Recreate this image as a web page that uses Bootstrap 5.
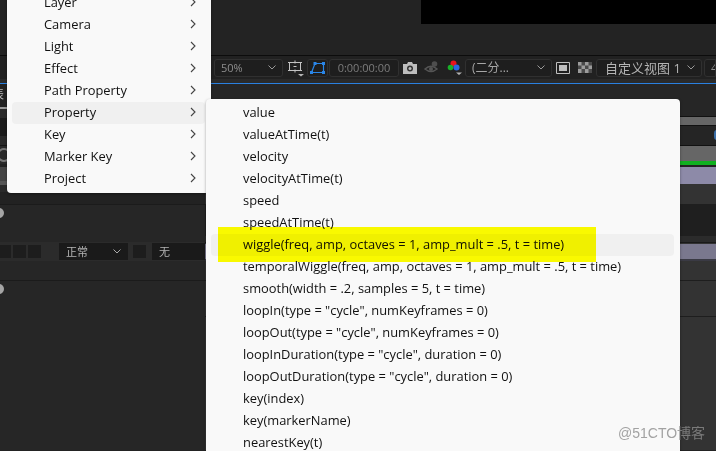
<!DOCTYPE html>
<html lang="zh">
<head>
<meta charset="utf-8">
<title>Property menu</title>
<link rel="stylesheet" href="https://cdn.jsdelivr.net/npm/bootstrap@5.3.0/dist/css/bootstrap.min.css">
<style>
html,body{height:451px;overflow:hidden}
body{background:#232323;position:relative;font-family:"Open Sans","Noto Sans CJK SC",sans-serif;width:716px}
.ae-head{height:56px;border-bottom:1px solid #0c0c0c;background:#232323}
.ae-black{width:295px;height:24px;background:#000}
.ae-tools{height:23px;padding-left:214px;background:#212121}
.ae-tools svg{flex:none}
.ae-sub{height:4px;background:#2a2a2a}
.ae-blue{height:1px;background:#2a80e0}
.ae-box{height:18px;flex:none;border:1px solid #303030;border-radius:3px;background:#1e1e1e;color:#8e8e8e;font-size:11px;line-height:16px;padding:0 6px;white-space:nowrap}
.ae-zoom{width:69px}
.ae-icon1{margin-left:4px}
.ae-persp{width:21px;margin-left:2px;padding:0}
.ae-time{width:70px;margin-left:1px;text-align:center;color:#7c7c7c;padding:0;font-size:11px}
.ae-cam{margin-left:4px}
.ae-eye{margin-left:7px}
.ae-rgb{margin-left:8px}
.ae-res{width:87px;margin-left:2px;color:#a6a6a6;font-size:12px}
.ae-sq{margin-left:4px}
.ae-chk{margin-left:8px}
.ae-view{width:106px;margin-left:4px;color:#b4b4b4;font-size:13px;padding-left:8px;padding-right:6px}
.ae-last{flex:1 1 0;min-width:0;margin-left:2px;border-radius:3px 0 0 3px;padding:0 0 0 6px;overflow:hidden}
.ae-low{height:366px}
.ae-left{width:205px;flex:none;background:#262626}
.ae-right{flex:1 1 auto;background:#333}
.ae-la{height:23px;background:#222;overflow:hidden;color:#bbb;font-size:12px;line-height:22px}
.ae-la span{margin-left:-8px;display:block}
.ae-lb{height:2px;background:#999}
.ae-lc{height:9px;background:#2a2a2a}
.ae-ld{height:18px;background:#1b1b1b}
.ae-le{height:10px;background:#2a2a2a;border-bottom:1px solid #161616}
.ae-lf{height:18px;background:#2a2a2a;position:relative;overflow:hidden}
.ae-lg{height:3px;background:#222}
.ae-lh{height:14px;background:#444}
.ae-li{height:4px;background:#555}
.ae-lj{height:7px;background:#2a2a2a}
.ae-lk{height:13px;background:#222;border-bottom:1px solid #1b1b1b}
.ae-l3{height:37px;background:#262626;position:relative}
.ae-ctl{height:19px;background:#2b2b2b}
.ae-cell{width:13px;height:13px;background:#1d1d1d;flex:none;margin-right:2px}
.ae-cell0{width:11px}
.ae-drop{width:69px;height:17px;margin-left:16px;background:#1a1a1a;color:#b5b5b5;font-size:11px;line-height:17px;padding:0 7px;flex:none}
.ae-cell2{margin-left:5px;margin-right:6px}
.ae-drop2{flex:1 1 auto;height:17px;background:#1a1a1a;color:#b5b5b5;font-size:11px;line-height:17px;padding:0 7px}
.ae-l4{height:20px;background:#262626;border-bottom:1px solid #1b1b1b}
.ae-l5{height:169px;background:#262626;position:relative}
.ae-dot{position:absolute;left:-6px;top:3px;width:10px;height:10px;border-radius:50%;background:#a5a5a5}
.ae-ring{position:absolute;left:-3px;top:2px;width:14px;height:14px;border-radius:50%;border:2px solid #777}
.ae-r0{height:33px;background:#262626;border-bottom:1px solid #111}
.ae-r1{height:9px;background:#666;border-bottom:1px solid #111}
.ae-r2{height:20px;background:#252525;border-bottom:1px solid #111;position:relative;overflow:hidden}
.ae-pin{position:absolute;right:-4px;top:4px;width:6px;height:10px;border-radius:3px;background:#3a6ea8}
.ae-r3{height:15px;background:#666}
.ae-r4{height:4px;background:#10b020}
.ae-r5a{height:2px;background:#222}
.ae-r5{height:17px;background:#8d8aa8}
.ae-r6{height:20px;background:#333}
.ae-r6b{height:32px;background:#1f1f1f}
.ae-r6c{height:7px;background:#2b2b2b;border-bottom:1px solid #1a1a1a}
.ae-r6d{height:1px;background:#333}
.ae-r7{height:15px;background:#7a788e}
.ae-r7b{height:2px;background:#3a3a44}
.ae-r8{height:20px;background:#333;border-bottom:1px solid #1e1e1e}
.ae-r9{height:36px;background:#333;border-bottom:1px solid #1e1e1e}
.ae-menu{position:absolute;background:#f9f9f9;border-radius:4px;box-shadow:0 1px 3px rgba(0,0,0,.35);color:#111;font-size:12.88px}
.ae-main{left:7px;top:-12px;width:204px;height:205px;padding-top:4px}
.ae-item{height:22px;line-height:20px;padding:0 0 2px 32px;margin:0 6px 0 5px;border-radius:4px;white-space:nowrap}
.ae-item.ae-on{background:#f0f0f0}
.ae-item svg{margin-right:9px}
.ae-sub-menu{left:206px;top:99px;width:474px;height:360px;padding-top:3px}
.ae-hl{position:absolute;left:218px;top:227px;width:378px;height:35px;background:#ff0;mix-blend-mode:multiply}
.ae-mark{position:absolute;left:618px;top:423px;font-size:14px;color:rgba(140,140,140,.8);font-family:"Liberation Sans","Noto Sans CJK SC",sans-serif;white-space:nowrap}
</style>
</head>
<body>
<div class="ae-head d-flex justify-content-end"><div class="ae-black"></div></div>
<div class="ae-tools d-flex align-items-center">
  <div class="ae-box ae-zoom d-flex justify-content-between align-items-center"><span>50%</span><svg width="8" height="5" viewBox="0 0 8 5"><path d="M.5.5 4 4 7.500.5" fill="none" stroke="#999"/></svg></div>
  <svg class="ae-icon1" width="18" height="18" viewBox="0 0 18 18"><path d="M2.500 3.500h11v8h-11z" fill="none" stroke="#c4c4c4"/><path d="M1 3h3v1H1zM12 3h3v1h-3zM1 11h3v1H1zM12 11h3v1h-3z" fill="#c4c4c4"/><path d="M8 1.500v3M8 10.500v3M6.500 7.500h3" stroke="#c4c4c4"/><path d="M11 15h6l-3 2.500z" fill="#b5b5b5"/></svg>
  <div class="ae-box ae-persp d-flex align-items-center justify-content-center"><svg width="15" height="13" viewBox="0 0 15 13"><path d="M1.500 11.500 5 2.500h8.500v9z" fill="none" stroke="#2a86e8" stroke-width="1.200"/><path d="M0 10h3v3H0zM3.500 1h3v3h-3zM12 1h3v3h-3zM12 10h3v3h-3z" fill="#2a86e8"/></svg></div>
  <div class="ae-box ae-time">0:00:00:00</div>
  <svg class="ae-cam" width="14" height="12" viewBox="0 0 14 12"><path d="M0 2h4l1-2h4l1 2h4v10H0z" fill="#bdbdbd"/><circle cx="7" cy="6.500" r="3" fill="#333"/><circle cx="7" cy="6.500" r="1.500" fill="#bdbdbd"/></svg>
  <svg class="ae-eye" width="15" height="13" viewBox="0 0 15 13"><path d="M1 8q6-5.500 12 0-6 5-12 0z" fill="none" stroke="#555" stroke-width="1.500"/><circle cx="10.500" cy="3" r="2.800" fill="#4e4e4e"/><circle cx="7" cy="8" r="2" fill="#555"/></svg>
  <svg class="ae-rgb" width="16" height="18" viewBox="0 0 16 18"><circle cx="6.500" cy="4.500" r="3" fill="#e8141c"/><circle cx="3.500" cy="8.500" r="2.800" fill="#18b028"/><circle cx="9.500" cy="8.500" r="3" fill="#2a68e0"/><path d="M9 13.500h6l-3 2.500z" fill="#b5b5b5"/></svg>
  <div class="ae-box ae-res d-flex justify-content-between align-items-center"><span>(二分...</span><svg width="8" height="5" viewBox="0 0 8 5"><path d="M.5.5 4 4 7.500.5" fill="none" stroke="#999"/></svg></div>
  <svg class="ae-sq" width="14" height="12" viewBox="0 0 14 12"><path d="M.5.500h13v11H.500z" fill="none" stroke="#c0c0c0"/><path d="M3 3h8v6H3z" fill="#c0c0c0"/></svg>
  <svg class="ae-chk" width="14" height="11" viewBox="0 0 14 11"><path d="M0 0h14v11H0z" fill="#4a4a4a"/><path d="M0 0h3.500v3.500H0zM7 0h3.500v3.500H7zM3.500 3.500H7V7H3.500zM10.500 3.500H14V7h-3.500zM0 7h3.500v4H0zM7 7h3.500v4H7z" fill="#9c9c9c"/></svg>
  <div class="ae-box ae-view d-flex justify-content-between align-items-center"><span>自定义视图 1</span><svg width="8" height="5" viewBox="0 0 8 5"><path d="M.5.5 4 4 7.500.5" fill="none" stroke="#999"/></svg></div>
  <div class="ae-box ae-last">4</div>
</div>
<div class="ae-sub"></div>
<div class="ae-blue"></div>
<div class="ae-low d-flex">
  <div class="ae-left">
    <div class="ae-la"><span>表</span></div>
    <div class="ae-lb"></div>
    <div class="ae-lc"></div>
    <div class="ae-ld"></div>
    <div class="ae-le"></div>
    <div class="ae-lf"><span class="ae-ring"></span></div>
    <div class="ae-lg"></div>
    <div class="ae-lh"></div>
    <div class="ae-li"></div>
    <div class="ae-lj"></div>
    <div class="ae-lk"></div>
    <div class="ae-l3"><span class="ae-dot"></span></div>
    <div class="ae-ctl d-flex align-items-center">
      <span class="ae-cell ae-cell0"></span><span class="ae-cell"></span><span class="ae-cell"></span>
      <span class="ae-drop d-flex justify-content-between align-items-center"><span>正常</span><svg width="8" height="5" viewBox="0 0 8 5"><path d="M.5.5 4 4 7.500.5" fill="none" stroke="#aaa"/></svg></span>
      <span class="ae-cell ae-cell2"></span>
      <span class="ae-drop2">无</span>
    </div>
    <div class="ae-l4"></div>
    <div class="ae-l5"><span class="ae-dot"></span></div>
  </div>
  <div class="ae-right">
    <div class="ae-r0"></div>
    <div class="ae-r1"></div>
    <div class="ae-r2"><span class="ae-pin"></span></div>
    <div class="ae-r3"></div>
    <div class="ae-r4"></div>
    <div class="ae-r5a"></div>
    <div class="ae-r5"></div>
    <div class="ae-r6"></div>
    <div class="ae-r6b"></div>
    <div class="ae-r6c"></div>
    <div class="ae-r6d"></div>
    <div class="ae-r7"></div>
    <div class="ae-r7b"></div>
    <div class="ae-r8"></div>
    <div class="ae-r9"></div>
  </div>
</div>

<div class="ae-menu ae-main">
  <div class="ae-item d-flex justify-content-between align-items-center"><span>Layer</span><svg width="6" height="10" viewBox="0 0 6 10"><path d="m1 1 4 4-4 4" fill="none" stroke="#444" stroke-width="1.100"/></svg></div>
  <div class="ae-item d-flex justify-content-between align-items-center"><span>Camera</span><svg width="6" height="10" viewBox="0 0 6 10"><path d="m1 1 4 4-4 4" fill="none" stroke="#444" stroke-width="1.100"/></svg></div>
  <div class="ae-item d-flex justify-content-between align-items-center"><span>Light</span><svg width="6" height="10" viewBox="0 0 6 10"><path d="m1 1 4 4-4 4" fill="none" stroke="#444" stroke-width="1.100"/></svg></div>
  <div class="ae-item d-flex justify-content-between align-items-center"><span>Effect</span><svg width="6" height="10" viewBox="0 0 6 10"><path d="m1 1 4 4-4 4" fill="none" stroke="#444" stroke-width="1.100"/></svg></div>
  <div class="ae-item d-flex justify-content-between align-items-center"><span>Path Property</span><svg width="6" height="10" viewBox="0 0 6 10"><path d="m1 1 4 4-4 4" fill="none" stroke="#444" stroke-width="1.100"/></svg></div>
  <div class="ae-item ae-on d-flex justify-content-between align-items-center"><span>Property</span><svg width="6" height="10" viewBox="0 0 6 10"><path d="m1 1 4 4-4 4" fill="none" stroke="#444" stroke-width="1.100"/></svg></div>
  <div class="ae-item d-flex justify-content-between align-items-center"><span>Key</span><svg width="6" height="10" viewBox="0 0 6 10"><path d="m1 1 4 4-4 4" fill="none" stroke="#444" stroke-width="1.100"/></svg></div>
  <div class="ae-item d-flex justify-content-between align-items-center"><span>Marker Key</span><svg width="6" height="10" viewBox="0 0 6 10"><path d="m1 1 4 4-4 4" fill="none" stroke="#444" stroke-width="1.100"/></svg></div>
  <div class="ae-item d-flex justify-content-between align-items-center"><span>Project</span><svg width="6" height="10" viewBox="0 0 6 10"><path d="m1 1 4 4-4 4" fill="none" stroke="#444" stroke-width="1.100"/></svg></div>
</div>

<div class="ae-menu ae-sub-menu">
  <div class="ae-item">value</div>
  <div class="ae-item">valueAtTime(t)</div>
  <div class="ae-item">velocity</div>
  <div class="ae-item">velocityAtTime(t)</div>
  <div class="ae-item">speed</div>
  <div class="ae-item">speedAtTime(t)</div>
  <div class="ae-item ae-on">wiggle(freq, amp, octaves = 1, amp_mult = .5, t = time)</div>
  <div class="ae-item">temporalWiggle(freq, amp, octaves = 1, amp_mult = .5, t = time)</div>
  <div class="ae-item">smooth(width = .2, samples = 5, t = time)</div>
  <div class="ae-item">loopIn(type = "cycle", numKeyframes = 0)</div>
  <div class="ae-item">loopOut(type = "cycle", numKeyframes = 0)</div>
  <div class="ae-item">loopInDuration(type = "cycle", duration = 0)</div>
  <div class="ae-item">loopOutDuration(type = "cycle", duration = 0)</div>
  <div class="ae-item">key(index)</div>
  <div class="ae-item">key(markerName)</div>
  <div class="ae-item">nearestKey(t)</div>
</div>
<div class="ae-hl"></div>
<div class="ae-mark">@51CTO博客</div>
<script src="https://cdn.jsdelivr.net/npm/bootstrap@5.3.0/dist/js/bootstrap.bundle.min.js"></script>
</body>
</html>
